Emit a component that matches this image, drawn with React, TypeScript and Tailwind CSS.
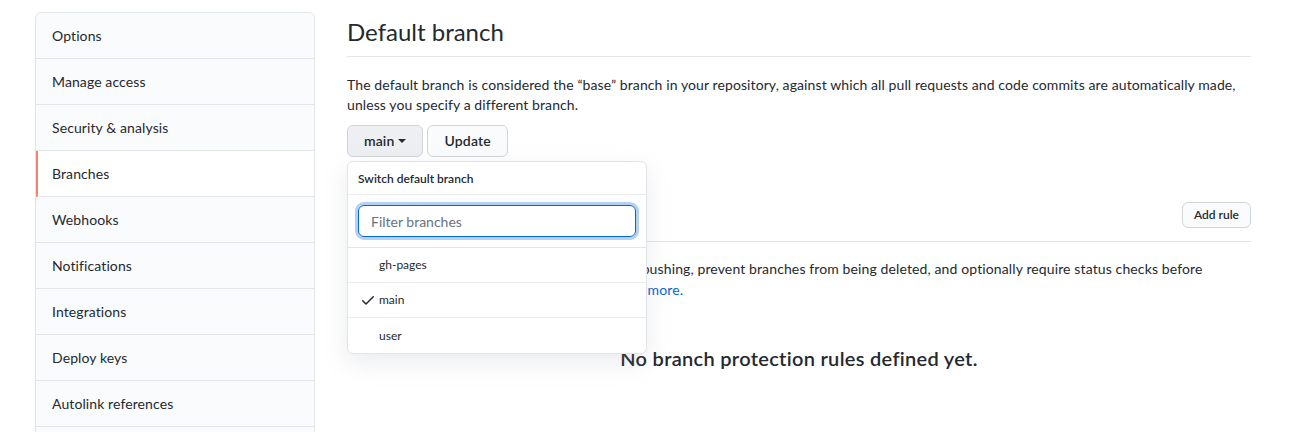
import { useState } from "react";

const NAV = [
  "Options",
  "Manage access",
  "Security & analysis",
  "Branches",
  "Webhooks",
  "Notifications",
  "Integrations",
  "Deploy keys",
  "Autolink references",
  "Actions",
];

const BRANCHES = ["gh-pages", "main", "user"];

function Check() {
  return (
    <svg width="16" height="16" viewBox="0 0 16 16" fill="#24292e">
      <path d="M13.78 4.22a.75.75 0 010 1.06l-7.25 7.25a.75.75 0 01-1.06 0L2.22 9.28a.75.75 0 011.06-1.06L6 10.94l6.72-6.72a.75.75 0 011.06 0z" />
    </svg>
  );
}

export default function App() {
  const [filter, setFilter] = useState("");
  const current = "main";

  return (
    <div
      className="h-[432px] overflow-hidden bg-white text-[#24292e]"
      style={{ fontFamily: '"Segoe UI", Lato, "Noto Sans", sans-serif' }}
    >
      <div className="flex gap-8 pl-[35px] pr-16 pt-3">
        <nav className="w-[280px] shrink-0 self-start overflow-hidden rounded-md border border-[#e1e4e8] bg-[#fafbfc]">
          {NAV.map((n) => {
            const active = n === "Branches";
            return (
              <div
                key={n}
                className={
                  active
                    ? "flex h-[46px] items-center border-b border-[#e1e4e8] border-l-2 border-l-[#f9826c] bg-white pl-[14px] text-sm tracking-[0.1px]"
                    : "flex h-[46px] items-center border-b border-[#e1e4e8] pl-4 text-sm tracking-[0.1px] last:border-b-0"
                }
              >
                {n}
              </div>
            );
          })}
        </nav>

        <main className="w-[904px] shrink-0">
          <h2 className="border-b border-[#e1e4e8] pb-[9px] pt-[5px] text-2xl font-normal leading-[30px]">
            Default branch
          </h2>
          <p className="mt-[18px] text-sm leading-5 tracking-[0.1px]">
            The default branch is considered the “base” branch in your repository, against which all pull requests and code commits are automatically made, unless you specify a different branch.
          </p>

          <div className="relative mt-[10px] flex gap-1">
            <button
              type="button"
              className="flex h-8 items-center gap-1 rounded-md border border-[#d1d5da] bg-[#edeff2] px-4 text-sm font-semibold tracking-[0.1px]"
            >
              main
              <svg width="8" height="4" viewBox="0 0 8 4" fill="#24292e">
                <path d="M0 0h8L4 4z" />
              </svg>
            </button>
            <button
              type="button"
              className="h-8 rounded-md border border-[#d1d5da] bg-[#fafbfc] px-4 text-sm font-semibold tracking-[0.2px]"
            >
              Update
            </button>

            <div className="absolute left-0 top-9 z-10 w-[300px] overflow-hidden rounded-md border border-[#e1e4e8] bg-white shadow-[0_8px_24px_rgba(149,157,165,0.2)]">
              <div className="border-b border-[#eaecef] px-[10px] pb-[7px] pt-[9px] text-xs font-semibold leading-4">
                Switch default branch
              </div>
              <div className="border-b border-[#e1e4e8] p-[10px]">
                <input
                  autoFocus
                  value={filter}
                  onChange={(e) => setFilter(e.target.value)}
                  placeholder="Filter branches"
                  className="h-8 w-full rounded-md border border-[#0366d6] px-3 text-sm text-[#24292e] shadow-[0_0_0_3px_rgba(3,102,214,0.3)] outline-none placeholder:text-[#6a737d]"
                />
              </div>
              {BRANCHES.filter((b) => b.includes(filter)).map((b) => (
                <div
                  key={b}
                  className="flex h-[35px] items-center border-b border-[#eaecef] pl-3 text-xs last:border-b-0"
                >
                  <span className="flex w-4 items-center">{b === current && <Check />}</span>
                  <span className="ml-[3px]">{b}</span>
                </div>
              ))}
            </div>
          </div>

          <div className="mt-[44px] flex items-center justify-between border-b border-[#e1e4e8] pb-3">
            <h2 className="text-2xl font-normal leading-[28px]">Branch protection rules</h2>
            <button
              type="button"
              className="h-[26px] rounded-md border border-[#d1d5da] bg-[#fafbfc] px-[11px] text-xs font-semibold"
            >
              Add rule
            </button>
          </div>
          <p className="mt-4 text-sm leading-[21px] tracking-[0.12px]">
            Define branch protection rules to disable force pushing, prevent branches from being deleted, and optionally require status checks before merging. New to branch protection rules?{" "}
            <a href="#" className="text-[#0366d6]">Learn more.</a>
          </p>

          <div className="mt-[44px] text-center text-xl font-semibold tracking-[0.3px]">
            No branch protection rules defined yet.
          </div>
        </main>
      </div>
    </div>
  );
}
